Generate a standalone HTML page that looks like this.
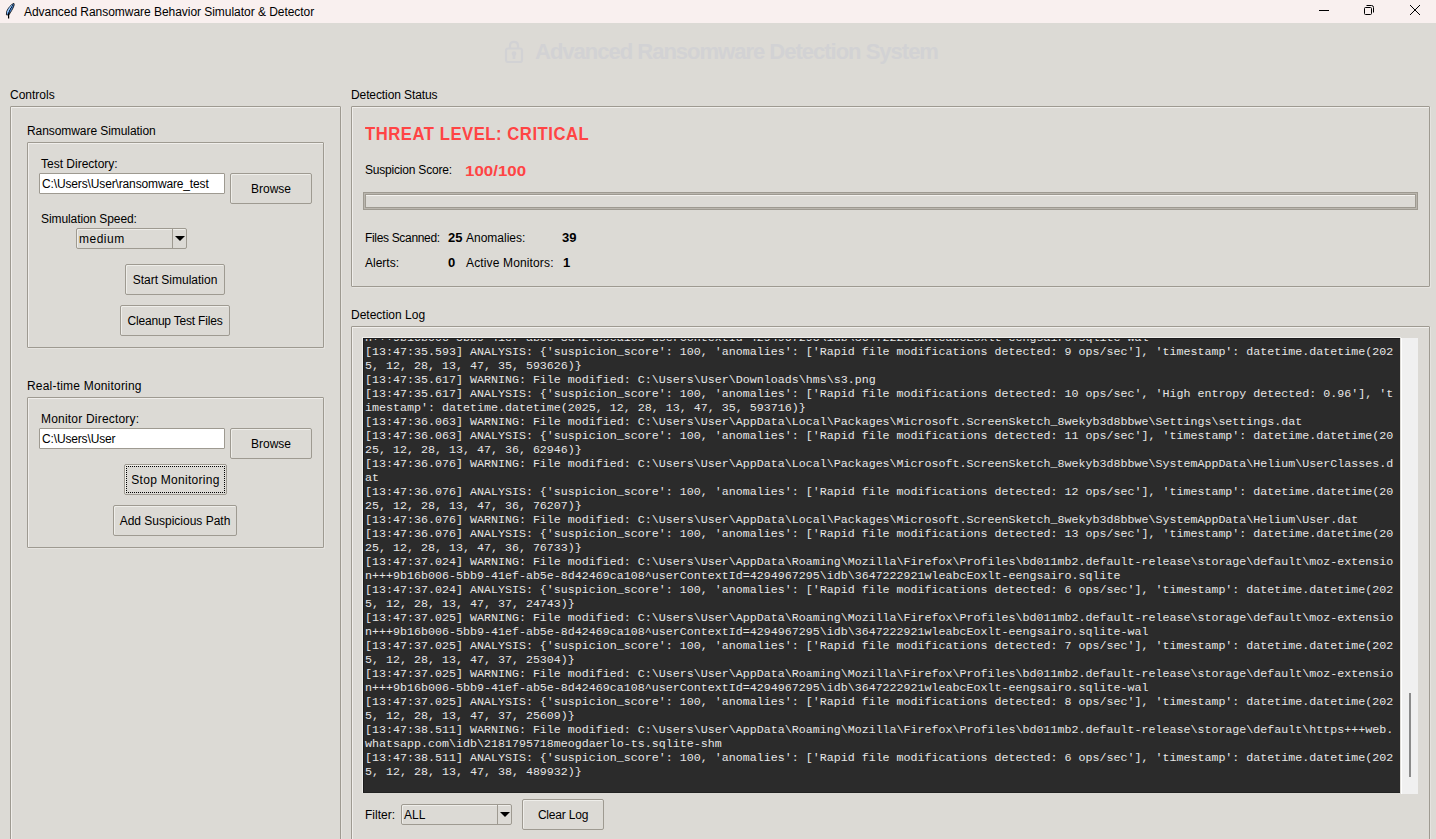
<!DOCTYPE html>
<html>
<head>
<meta charset="utf-8">
<style>
html,body{margin:0;padding:0;}
body{width:1436px;height:839px;overflow:hidden;position:relative;background:#dcdad5;font-family:"Liberation Sans",sans-serif;font-size:12px;color:#000;}
.a{position:absolute;white-space:pre;line-height:14px;}
#titlebar{position:absolute;left:0;top:0;width:1436px;height:23px;background:#f9f0ef;}
.frame{position:absolute;border:1px solid #9e9a91;border-radius:1px;box-shadow:inset 1px 1px 0 #f0eeeb,1px 1px 0 #e6e4e0;}
.btn{position:absolute;border:1px solid #9e9a91;border-radius:2px;background:#dcdad5;box-shadow:inset 1px 1px 0 #efeeea;text-align:center;}
.entry{position:absolute;border:1px solid #9e9a91;border-radius:1px;background:#fff;}
.combo{position:absolute;border:1px solid #9e9a91;border-radius:2px;background:#dcdad5;box-shadow:inset 1px 1px 0 #efeeea;}
.combo .div{position:absolute;top:0;bottom:0;width:1px;background:#9e9a91;}
.combo .arr{position:absolute;width:0;height:0;border-left:5px solid transparent;border-right:5px solid transparent;border-top:5px solid #000;}
#log{position:absolute;left:363px;top:338px;width:1037px;height:455px;background:#2b2b2b;border-top:1px solid #1b1b1b;border-left:1px solid #1b1b1b;border-bottom:1px solid #222;box-sizing:border-box;overflow:hidden;}
#log .l{position:absolute;left:1px;white-space:pre;font-family:"Liberation Mono",monospace;font-size:11.667px;line-height:14px;color:#e6e6e6;}
</style>
</head>
<body>
<div id="titlebar"></div>
<svg style="position:absolute;left:0;top:0" width="20" height="22" viewBox="0 0 20 22">
<path d="M13.8 3.3 C11 4.6 8.2 8 6.8 11.2 L6.4 14.8 L8.8 15 C10.6 12.4 13 8.6 14 5.6 C14.3 4.6 14.2 3.8 13.8 3.3 Z" fill="#4f94ec" stroke="#111" stroke-width="0.9"/>
<path d="M13 4.2 C10.8 5.6 8.6 8.6 7.3 11.4 L7.1 14 L9 10 L12.6 5 Z" fill="#b4d8fc"/>
<path d="M13.2 4.6 L10.2 9.6 L9 12.6" fill="none" stroke="#000" stroke-width="1.1" stroke-dasharray="1.4 0.8"/>
<path d="M9.2 12.2 L8.6 14 L8.6 18.4" fill="none" stroke="#000" stroke-width="1.2"/>
</svg>
<div class="a" style="letter-spacing:-0.04px;left:24px;top:5px;">Advanced Ransomware Behavior Simulator &amp; Detector</div>
<div style="position:absolute;left:1319px;top:10px;width:10px;height:1px;background:#000"></div>
<svg style="position:absolute;left:1363px;top:4px" width="12" height="12" viewBox="0 0 12 12">
<rect x="1.5" y="3.5" width="7" height="7" rx="1" fill="none" stroke="#000" stroke-width="1"/>
<path d="M3.5 1.5 H8.5 Q10.5 1.5 10.5 3.5 V8.5" fill="none" stroke="#000" stroke-width="1"/>
</svg>
<svg style="position:absolute;left:1409px;top:4px" width="12" height="12" viewBox="0 0 12 12">
<path d="M1 1 L11 11 M11 1 L1 11" fill="none" stroke="#000" stroke-width="1"/>
</svg>

<!-- faded header -->
<svg style="position:absolute;left:504px;top:40px" width="20" height="23" viewBox="0 0 20 23">
<path d="M6 8.5 V5.8 Q6 1.8 10 1.8 Q14 1.8 14 5.8 V8.5" fill="none" stroke="#d2d2d4" stroke-width="2.2"/>
<rect x="2" y="8.5" width="16" height="13.6" rx="2" fill="none" stroke="#d2d2d4" stroke-width="2.1"/>
<rect x="8.6" y="13" width="2.8" height="6" fill="#d2d2d4"/>
<circle cx="10" cy="13.6" r="2.3" fill="#d2d2d4"/>
</svg>
<div class="a" style="left:535px;top:39px;font-size:22px;line-height:26px;font-weight:bold;color:#d2d2d4;letter-spacing:-1px;">Advanced Ransomware Detection System</div>

<!-- Controls -->
<div class="a" style="left:10px;top:88px;">Controls</div>
<div class="frame" style="left:10px;top:106px;width:329px;height:800px;"></div>
<div class="a" style="letter-spacing:-0.07px;left:27px;top:124px;">Ransomware Simulation</div>
<div class="frame" style="left:27px;top:142px;width:295px;height:204px;"></div>
<div class="a" style="left:41px;top:157px;letter-spacing:0px;">Test Directory:</div>
<div class="entry" style="left:39px;top:173px;width:184px;height:19px;"><div class="a" style="letter-spacing:-0.14px;left:2px;top:3px;">C:\Users\User\ransomware_test</div></div>
<div class="btn" style="left:230px;top:173px;width:80px;height:29px;"><div class="a" style="left:0;right:0;top:8px;">Browse</div></div>
<div class="a" style="letter-spacing:-0.09px;left:41px;top:212px;">Simulation Speed:</div>
<div class="combo" style="left:76px;top:228px;width:109px;height:19px;background:#dcdad5;"><div class="a" style="letter-spacing:0.5px;left:2px;top:3px;">medium</div><div class="div" style="left:95px"></div><div class="arr" style="left:98px;top:7px;"></div></div>
<div class="btn" style="left:125px;top:264px;width:98px;height:29px;"><div class="a" style="left:0;right:0;top:8px;letter-spacing:0px;">Start Simulation</div></div>
<div class="btn" style="left:120px;top:305px;width:108px;height:29px;"><div class="a" style="left:0;right:0;top:8px;letter-spacing:-0.2px;">Cleanup Test Files</div></div>

<div class="a" style="left:27px;top:379px;letter-spacing:0.2px;">Real-time Monitoring</div>
<div class="frame" style="left:27px;top:397px;width:295px;height:149px;"></div>
<div class="a" style="left:41px;top:412px;letter-spacing:0.2px;">Monitor Directory:</div>
<div class="entry" style="left:39px;top:428px;width:184px;height:19px;"><div class="a" style="letter-spacing:-0.15px;left:2px;top:3px;">C:\Users\User</div></div>
<div class="btn" style="left:230px;top:428px;width:80px;height:29px;"><div class="a" style="left:0;right:0;top:8px;">Browse</div></div>
<div class="btn" style="left:124px;top:464px;width:101px;height:29px;"><div style="position:absolute;left:1px;top:1px;right:1px;bottom:1px;border:1px dotted #000;"></div><div class="a" style="left:0;right:0;top:8px;letter-spacing:0.3px;">Stop Monitoring</div></div>
<div class="btn" style="left:113px;top:505px;width:122px;height:29px;"><div class="a" style="left:0;right:0;top:8px;">Add Suspicious Path</div></div>

<!-- Detection Status -->
<div class="a" style="letter-spacing:-0.1px;left:351px;top:88px;">Detection Status</div>
<div class="frame" style="left:351px;top:106px;width:1077px;height:179px;"></div>
<div class="a" style="left:365px;top:123px;font-size:18.5px;line-height:22px;font-weight:bold;color:#ff4444;letter-spacing:0.6px;transform:scaleX(0.9);transform-origin:0 0;">THREAT LEVEL: CRITICAL</div>
<div class="a" style="left:365px;top:163px;letter-spacing:-0.2px;">Suspicion Score:</div>
<div class="a" style="left:465px;top:162px;font-size:15.5px;line-height:18px;font-weight:bold;color:#ff4444;transform:scaleX(1.09);transform-origin:0 0;">100/100</div>
<div style="position:absolute;left:363px;top:192px;width:1055px;height:18px;box-sizing:border-box;border:1px solid #9e9a91;box-shadow:inset 0 0 0 1px #bab6ae,inset 0 0 0 2px #9e9a91;"><div style="position:absolute;left:2px;top:2px;right:2px;height:1px;background:#f4f2ef;"></div></div>
<div class="a" style="left:365px;top:231px;letter-spacing:-0.33px;">Files Scanned:</div>
<div class="a" style="left:448px;top:230px;font-size:13px;line-height:15px;font-weight:bold;">25</div>
<div class="a" style="left:466px;top:231px;">Anomalies:</div>
<div class="a" style="left:562px;top:230px;font-size:13px;line-height:15px;font-weight:bold;">39</div>
<div class="a" style="left:365px;top:256px;">Alerts:</div>
<div class="a" style="left:448px;top:255px;font-size:13px;line-height:15px;font-weight:bold;">0</div>
<div class="a" style="left:466px;top:256px;letter-spacing:0.14px;">Active Monitors:</div>
<div class="a" style="left:563px;top:255px;font-size:13px;line-height:15px;font-weight:bold;">1</div>

<!-- Detection Log -->
<div class="a" style="left:351px;top:308px;">Detection Log</div>
<div class="frame" style="left:351px;top:326px;width:1077px;height:600px;"></div>
<div style="position:absolute;left:362px;top:337px;width:1039px;height:1px;background:#efeeeb;"></div><div style="position:absolute;left:362px;top:337px;width:1px;height:456px;background:#efeeeb;"></div>
<div id="log">
<div class="l" style="top:-8px">n+++9b16b006-5bb9-41ef-ab5e-8d42469ca108^userContextId=4294967295\idb\3647222921wleabcEoxlt-eengsairo.sqlite-wal</div>
<div class="l" style="top:6px">[13:47:35.593] ANALYSIS: {'suspicion_score': 100, 'anomalies': ['Rapid file modifications detected: 9 ops/sec'], 'timestamp': datetime.datetime(202</div>
<div class="l" style="top:20px">5, 12, 28, 13, 47, 35, 593626)}</div>
<div class="l" style="top:34px">[13:47:35.617] WARNING: File modified: C:\Users\User\Downloads\hms\s3.png</div>
<div class="l" style="top:48px">[13:47:35.617] ANALYSIS: {'suspicion_score': 100, 'anomalies': ['Rapid file modifications detected: 10 ops/sec', 'High entropy detected: 0.96'], 't</div>
<div class="l" style="top:62px">imestamp': datetime.datetime(2025, 12, 28, 13, 47, 35, 593716)}</div>
<div class="l" style="top:76px">[13:47:36.063] WARNING: File modified: C:\Users\User\AppData\Local\Packages\Microsoft.ScreenSketch_8wekyb3d8bbwe\Settings\settings.dat</div>
<div class="l" style="top:90px">[13:47:36.063] ANALYSIS: {'suspicion_score': 100, 'anomalies': ['Rapid file modifications detected: 11 ops/sec'], 'timestamp': datetime.datetime(20</div>
<div class="l" style="top:104px">25, 12, 28, 13, 47, 36, 62946)}</div>
<div class="l" style="top:118px">[13:47:36.076] WARNING: File modified: C:\Users\User\AppData\Local\Packages\Microsoft.ScreenSketch_8wekyb3d8bbwe\SystemAppData\Helium\UserClasses.d</div>
<div class="l" style="top:132px">at</div>
<div class="l" style="top:146px">[13:47:36.076] ANALYSIS: {'suspicion_score': 100, 'anomalies': ['Rapid file modifications detected: 12 ops/sec'], 'timestamp': datetime.datetime(20</div>
<div class="l" style="top:160px">25, 12, 28, 13, 47, 36, 76207)}</div>
<div class="l" style="top:174px">[13:47:36.076] WARNING: File modified: C:\Users\User\AppData\Local\Packages\Microsoft.ScreenSketch_8wekyb3d8bbwe\SystemAppData\Helium\User.dat</div>
<div class="l" style="top:188px">[13:47:36.076] ANALYSIS: {'suspicion_score': 100, 'anomalies': ['Rapid file modifications detected: 13 ops/sec'], 'timestamp': datetime.datetime(20</div>
<div class="l" style="top:202px">25, 12, 28, 13, 47, 36, 76733)}</div>
<div class="l" style="top:216px">[13:47:37.024] WARNING: File modified: C:\Users\User\AppData\Roaming\Mozilla\Firefox\Profiles\bd011mb2.default-release\storage\default\moz-extensio</div>
<div class="l" style="top:230px">n+++9b16b006-5bb9-41ef-ab5e-8d42469ca108^userContextId=4294967295\idb\3647222921wleabcEoxlt-eengsairo.sqlite</div>
<div class="l" style="top:244px">[13:47:37.024] ANALYSIS: {'suspicion_score': 100, 'anomalies': ['Rapid file modifications detected: 6 ops/sec'], 'timestamp': datetime.datetime(202</div>
<div class="l" style="top:258px">5, 12, 28, 13, 47, 37, 24743)}</div>
<div class="l" style="top:272px">[13:47:37.025] WARNING: File modified: C:\Users\User\AppData\Roaming\Mozilla\Firefox\Profiles\bd011mb2.default-release\storage\default\moz-extensio</div>
<div class="l" style="top:286px">n+++9b16b006-5bb9-41ef-ab5e-8d42469ca108^userContextId=4294967295\idb\3647222921wleabcEoxlt-eengsairo.sqlite-wal</div>
<div class="l" style="top:300px">[13:47:37.025] ANALYSIS: {'suspicion_score': 100, 'anomalies': ['Rapid file modifications detected: 7 ops/sec'], 'timestamp': datetime.datetime(202</div>
<div class="l" style="top:314px">5, 12, 28, 13, 47, 37, 25304)}</div>
<div class="l" style="top:328px">[13:47:37.025] WARNING: File modified: C:\Users\User\AppData\Roaming\Mozilla\Firefox\Profiles\bd011mb2.default-release\storage\default\moz-extensio</div>
<div class="l" style="top:342px">n+++9b16b006-5bb9-41ef-ab5e-8d42469ca108^userContextId=4294967295\idb\3647222921wleabcEoxlt-eengsairo.sqlite-wal</div>
<div class="l" style="top:356px">[13:47:37.025] ANALYSIS: {'suspicion_score': 100, 'anomalies': ['Rapid file modifications detected: 8 ops/sec'], 'timestamp': datetime.datetime(202</div>
<div class="l" style="top:370px">5, 12, 28, 13, 47, 37, 25609)}</div>
<div class="l" style="top:384px">[13:47:38.511] WARNING: File modified: C:\Users\User\AppData\Roaming\Mozilla\Firefox\Profiles\bd011mb2.default-release\storage\default\https+++web.</div>
<div class="l" style="top:398px">whatsapp.com\idb\2181795718meogdaerlo-ts.sqlite-shm</div>
<div class="l" style="top:412px">[13:47:38.511] ANALYSIS: {'suspicion_score': 100, 'anomalies': ['Rapid file modifications detected: 6 ops/sec'], 'timestamp': datetime.datetime(202</div>
<div class="l" style="top:426px">5, 12, 28, 13, 47, 38, 489932)}</div>
</div>
<div style="position:absolute;left:1401px;top:338px;width:17px;height:456px;background:#f0f0f0;border-left:1px solid #fff;box-sizing:border-box;"></div>
<div style="position:absolute;left:1409px;top:693px;width:2px;height:84px;background:#8a8a8a;"></div>

<div class="a" style="left:365px;top:808px;">Filter:</div>
<div class="combo" style="left:401px;top:804px;width:109px;height:19px;"><div class="a" style="left:2px;top:3px;">ALL</div><div class="div" style="left:95px"></div><div class="arr" style="left:98px;top:7px;"></div></div>
<div class="btn" style="left:522px;top:799px;width:80px;height:29px;"><div class="a" style="letter-spacing:-0.2px;left:0;right:0;top:8px;">Clear Log</div></div>
</body>
</html>
